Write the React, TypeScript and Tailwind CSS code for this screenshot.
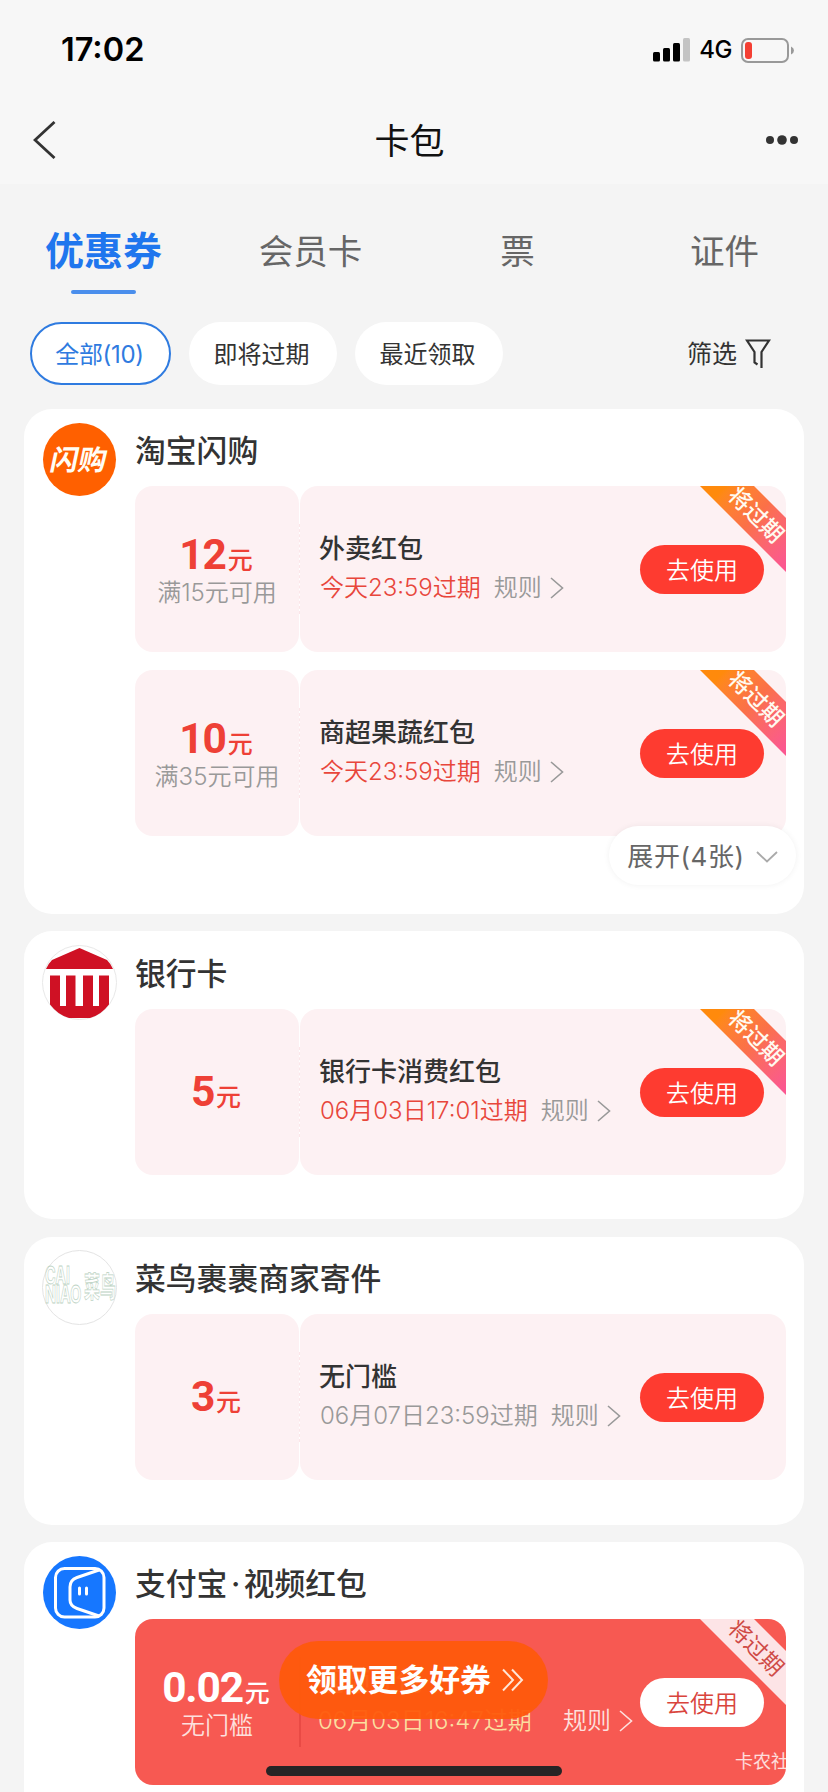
import type { ReactNode } from 'react';

interface CouponData {
  amount: string;
  condition?: string;
  title: string;
  expiry: string;
  urgent?: boolean;
}

interface CardProps {
  logo: ReactNode;
  name: ReactNode;
  className?: string;
  children: ReactNode;
}

const tabs = ['会员卡', '票', '证件'];

function ShangouLogo() {
  return (
    <div className="flex size-[73px] items-center justify-center rounded-full bg-[#ff6000]">
      <span className="-skew-x-12 text-[28px] leading-none font-bold text-[#fffdf5]">闪购</span>
    </div>
  );
}

function BankLogo() {
  return (
    <svg className="size-[75px] -m-px" viewBox="0 0 75 75">
      <circle cx="37.5" cy="37.5" r="37" fill="#fff" stroke="#e8e8e8" />
      <path d="M37.5 3L65 15Q69 19 71 24H4Q6 19 10 15Z" fill="#cf1124" />
      <path d="M8 30.5h10V61h6V30.5h9.500V61h7.500V30.5h10V61h6V30.5h10V59.500Q59 70 48 73H27Q16 70 8 59.500Z" fill="#cf1124" />
    </svg>
  );
}

function CainiaoLogo() {
  return (
    <div className="relative -m-px size-[75px] rounded-full border border-[#e4e4e4] bg-white text-transparent [-webkit-text-stroke:0.8px_#bdd3c4]">
      <span className="absolute top-[15px] left-[2px] origin-left scale-x-[.6] text-[24px] leading-[19px] font-bold whitespace-pre">
        {'CAI\nNIAO'}
      </span>
      <span className="absolute top-[21px] left-[41px] origin-left scale-x-[.55] text-[29px] leading-[32px] font-bold whitespace-nowrap">菜鸟</span>
    </div>
  );
}

function VideoLogo() {
  return (
    <svg className="size-[73px]" viewBox="0 0 73 73" fill="none" stroke="#fff" strokeWidth="3" strokeLinejoin="round">
      <circle cx="36.500" cy="36.500" r="36.500" fill="#1677ff" stroke="none" />
      <rect x="12.500" y="12.500" width="48.500" height="48.500" rx="9" />
      <path d="M56 14L34 21.500Q27 24 27 31V44Q27 50 34 52.500L56 60" />
      <path d="M36.500 32v6M43.500 32v6" strokeLinecap="round" />
    </svg>
  );
}

function Chevron({ className }: { className?: string }) {
  return (
    <svg className={`h-[22px] w-[14px] shrink-0 ${className ?? ''}`} viewBox="0 0 14 22" fill="none" stroke="currentColor" strokeWidth="1.6">
      <path d="M1 1L12.500 11L1 21" />
    </svg>
  );
}

function Ribbon({ light }: { light?: boolean }) {
  return (
    <div
      className={`absolute top-0 right-0 size-[86px] [clip-path:polygon(0_0,54px_0,86px_32px,86px_86px)] ${
        light ? 'bg-[#fde4e6]' : 'bg-linear-135 from-[#ff8a0c] from-15% via-[#fb7048] to-[#fb5790] to-95%'
      }`}
    >
      <span
        className={`absolute top-[15px] left-[16px] flex h-[28px] w-[80px] rotate-45 items-center justify-center text-[22.5px] leading-none whitespace-nowrap ${
          light ? 'text-[#cf4a45]' : 'font-medium text-[#fffaf0]'
        }`}
      >
        将过期
      </span>
    </div>
  );
}

function Card({ logo, name, className, children }: CardProps) {
  return (
    <section className={`flex rounded-[28px] bg-white pt-[14px] pr-[18px] pl-[19px] ${className ?? ''}`}>
      <div className="w-[92px] shrink-0">{logo}</div>
      <div className="min-w-0 flex-1">
        <h2 className="mb-[9px] flex h-[54px] items-center pt-[2px] text-[30.8px] leading-none font-medium text-[#333]">
          {name}
        </h2>
        <div className="flex flex-col gap-[18px]">{children}</div>
      </div>
    </section>
  );
}

function Amount({ value, condition, className }: { value: string; condition?: string; className: string }) {
  return (
    <div className={`flex w-[164px] flex-col items-center justify-center ${className}`}>
      <div className="flex h-[44px] items-baseline pr-[2px] leading-[44px]">
        <span className="font-[Roboto] text-[42.5px] font-bold tracking-[-1.2px]">{value}</span>
        <span className="ml-[2px] text-[25px] font-medium">元</span>
      </div>
      {condition && (
        <span className={`h-[29px] text-[24px] leading-[31px] font-[350] ${value === '0.02' ? 'text-[#fde0de]' : 'text-[#999]'}`}>
          {condition}
        </span>
      )}
    </div>
  );
}

function Coupon({ amount, condition, title, expiry, urgent }: CouponData) {
  return (
    <div className="relative flex h-[166px]">
      <Amount value={amount} condition={condition} className="rounded-[18px] bg-[#fdf1f3] text-[#ee4036]" />
      <div className="my-[38px] w-px border-l border-dashed border-[#fbe6e9]" />
      <div className="flex flex-1 justify-between rounded-[18px] bg-[#fdf1f3] pr-[22px] pl-[19px]">
        <div className="flex flex-col gap-[3px] pt-[45px]">
          <h3 className="h-9 text-[26px] leading-9 font-medium text-[#333]">{title}</h3>
          <div className="flex h-9 items-center pl-px text-[24px] leading-9 font-[350] whitespace-nowrap text-[#999]">
            <span className={urgent ? 'text-[#e8463b]' : ''}>{expiry}</span>
            <span className="ml-[13px]">规则</span>
            <Chevron className="ml-[8px]" />
          </div>
        </div>
        <button className="mt-[59px] h-[49px] w-[124px] shrink-0 rounded-full bg-[#fe3b30] text-[24px] leading-[51px] font-[350] text-white">
          去使用
        </button>
      </div>
      {urgent && <Ribbon />}
    </div>
  );
}

function VideoCoupon() {
  return (
    <div className="relative flex h-[166px] rounded-[18px] bg-[#f75952]">
      <Amount value="0.02" condition="无门槛" className="text-white" />
      <div className="my-[38px] w-[2px] bg-[#e94a45]" />
      <div className="flex flex-1 justify-between pr-[22px] pl-[17px]">
        <div className="flex flex-col gap-[3px] pt-[45px]">
          <h3 className="h-9 text-[26px] leading-9 font-medium text-white">视频红包</h3>
          <div className="flex h-9 items-center text-[24px] leading-9 font-[350] whitespace-nowrap text-[#fde0de]">
            <span className="w-[245px] text-[#fbdf9f]">06月03日16:47过期</span>
            <span>规则</span>
            <Chevron className="ml-[8px]" />
          </div>
        </div>
        <button className="mt-[59px] h-[49px] w-[124px] shrink-0 rounded-full bg-white text-[24px] leading-[51px] font-[350] text-[#d9443c]">
          去使用
        </button>
      </div>
      <Ribbon light />
    </div>
  );
}

function StatusBar() {
  return (
    <div className="flex h-[100px] items-center justify-between pr-[34px] pl-[61px] text-black">
      <span className="font-[Inter] text-[32.5px] leading-none font-semibold">17:02</span>
      <div className="flex items-center">
        <svg className="h-6 w-[38px]" viewBox="0 0 38 24">
          <rect x="0" y="14" width="7" height="9.500" rx="1.500" />
          <rect x="10" y="10" width="7" height="13.500" rx="1.500" />
          <rect x="20" y="5" width="7" height="18.500" rx="1.500" />
          <rect x="30" y="0" width="7" height="23.500" rx="1.500" fill="#c4c4c4" />
        </svg>
        <span className="ml-[8px] font-[Inter] text-[24px] leading-none font-medium tracking-[-0.5px]">4G</span>
        <svg className="ml-[9px] h-[25px] w-[53px]" viewBox="0 0 53 25" fill="none">
          <rect x="1" y="1" width="46" height="23" rx="6" stroke="#999" strokeWidth="2" />
          <rect x="4" y="4" width="7" height="17" rx="3" fill="#f43f33" />
          <path d="M50 8.500Q53 10 53 12.500T50 16.500Z" fill="#999" />
        </svg>
      </div>
    </div>
  );
}

export default function App() {
  return (
    <div className="relative h-[1792px] w-[828px] overflow-hidden bg-[#f4f4f4] font-[Inter,'Noto_Sans_CJK_SC',sans-serif]">
      {/* Header */}
      <header className="h-[184px] bg-[#f7f7f7]">
        <StatusBar />
        <div className="flex h-[80px] items-center justify-between pr-[30px] pl-[33px]">
          <svg className="h-[38px] w-[23px]" viewBox="0 0 23 38" fill="none" stroke="#333" strokeWidth="2.800">
            <path d="M21.500 1L2 19L21.500 37" />
          </svg>
          <h1 className="pt-[3px] pr-[3px] text-[35px] leading-none text-[#111]">卡包</h1>
          <svg className="h-3 w-[32px]" viewBox="0 0 32 12" fill="#333">
            <circle cx="4" cy="6" r="4" />
            <circle cx="16" cy="6" r="4.800" />
            <circle cx="28" cy="6" r="4" />
          </svg>
        </div>
      </header>

      {/* Tabs */}
      <nav className="grid h-[118px] grid-cols-4 pt-[40px] text-[34.5px] text-[#666]">
        <div className="flex flex-col items-center">
          <span className="h-[54px] text-[39px] leading-[53px] font-bold text-[#1f76ee]">优惠券</span>
          <span className="mt-[12px] h-[4px] w-[65px] rounded-full bg-[#4a8eec]" />
        </div>
        {tabs.map((tab) => (
          <span key={tab} className="text-center leading-[55px]">
            {tab}
          </span>
        ))}
      </nav>

      {/* Filters */}
      <div className="mt-[20px] flex h-[63px] items-center gap-[18px] pl-[30px] text-[24px] text-[#333]">
        <button className="h-[63px] w-[141px] rounded-full border-2 border-[#2f7be0] bg-white pt-[2px] pr-[2px] tracking-[-0.3px] text-[#2f7be0]">
          全部(10)
        </button>
        <button className="h-[63px] w-[148px] rounded-full bg-white pt-[2px] pr-[3px]">即将过期</button>
        <button className="h-[63px] w-[148px] rounded-full bg-white pt-[2px] pr-[3px]">最近领取</button>
        <button className="mr-[57px] ml-auto flex items-center gap-[8px] text-[25px]">
          <span className="pt-[3px]">筛选</span>
          <svg className="h-[29px] w-[26px]" viewBox="0 0 26 29" fill="none" stroke="#333" strokeWidth="2.200">
            <path d="M16.500 29V13L24 1.500H2L9.500 13V23.500L12.500 25.500" />
          </svg>
        </button>
      </div>

      {/* Coupon groups */}
      <main className="mt-[24px] flex flex-col gap-[17px] px-[24px]">
        <Card logo={<ShangouLogo />} name="淘宝闪购" className="relative h-[505px]">
          <Coupon amount="12" condition="满15元可用" title="外卖红包" expiry="今天23:59过期" urgent />
          <Coupon amount="10" condition="满35元可用" title="商超果蔬红包" expiry="今天23:59过期" urgent />
          <button className="absolute right-[8px] bottom-[29px] flex h-[59px] w-[187px] items-center justify-center rounded-full bg-white pt-[2px] text-[26px] tracking-[0.6px] text-[#666] shadow-[0_0_6px_rgba(0,0,0,0.06)]">
            展开(4张)
            <svg className="ml-[11px] h-[12px] w-[22px]" viewBox="0 0 22 12" fill="none" stroke="#aaa" strokeWidth="1.800">
              <path d="M1 1L11 10.500L21 1" />
            </svg>
          </button>
        </Card>
        <Card logo={<BankLogo />} name="银行卡" className="h-[288px] border-t border-white">
          <Coupon amount="5" title="银行卡消费红包" expiry="06月03日17:01过期" urgent />
        </Card>
        <Card logo={<CainiaoLogo />} name="菜鸟裹裹商家寄件" className="mt-px h-[288px]">
          <Coupon amount="3" title="无门槛" expiry="06月07日23:59过期" />
        </Card>
        <Card
          logo={<VideoLogo />}
          name={
            <>
              支付宝<span className="px-[3.5px]">·</span>视频红包
            </>
          }
          className="h-[288px]"
        >
          <VideoCoupon />
        </Card>
      </main>

      {/* Floating button */}
      <button className="absolute top-[1641px] left-[279px] flex h-[78px] w-[269px] items-center rounded-full bg-[#fe5a0c]/95 pl-[27px] text-[30.8px] font-bold text-white">
        领取更多好券
        <svg className="ml-[11px] h-[24px] w-[22px]" viewBox="0 0 22 24" fill="none" stroke="#ffe6d6" strokeWidth="2">
          <path d="M1 1.500L11 12L1 22.500M10 1.500L20 12L10 22.500" />
        </svg>
      </button>
      <span className="absolute top-[1750px] left-[735px] text-[18px] leading-6 text-white/80">卡农社</span>
      <div className="absolute top-[1766px] left-[266px] h-[10px] w-[296px] rounded-full bg-[#272425]" />
    </div>
  );
}
